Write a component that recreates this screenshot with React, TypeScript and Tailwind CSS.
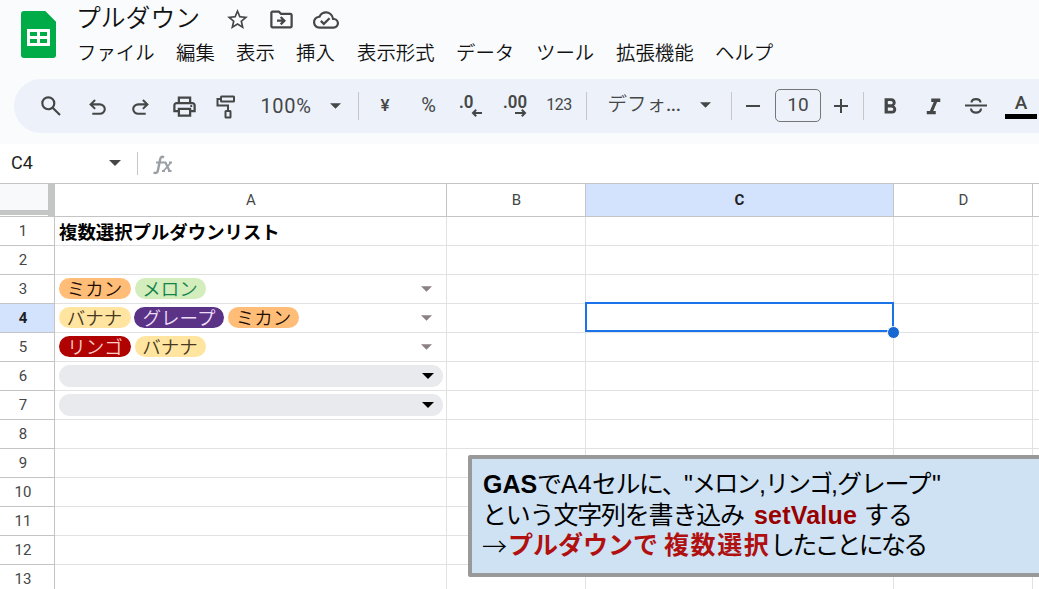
import type { ReactNode } from "react";
import {
  MdStarBorder,
  MdOutlineDriveFileMove,
  MdOutlineCloudDone,
  MdFormatBold,
  MdFormatItalic,
} from "react-icons/md";

const JP = "font-['Noto_Sans_CJK_JP',sans-serif]";

function Symbol({ d, className }: { d: string; className: string }) {
  return (
    <svg viewBox="0 -960 960 960" fill="currentColor" className={`shrink-0 ${className}`}>
      <path d={d} />
    </svg>
  );
}

function Item({ w, children }: { w: string; children: ReactNode }) {
  return <div className={`flex h-full shrink-0 items-center justify-center whitespace-nowrap ${w}`}>{children}</div>;
}

function Divider() {
  return <div className="h-7 w-px shrink-0 bg-[#c7c7c7]" />;
}

function Caret({ className }: { className: string }) {
  return (
    <svg viewBox="0 0 12 6" fill="currentColor" className={`shrink-0 ${className}`}>
      <path d="M0 0h12L6 6z" />
    </svg>
  );
}

function Chip({ w, color, children }: { w: string; color: string; children: ReactNode }) {
  return (
    <span
      className={`flex h-[21px] shrink-0 items-center justify-center rounded-full text-[18.5px] leading-[21px] font-[350] ${w} ${color}`}
    >
      {children}
    </span>
  );
}

function Seg({ w, children }: { w: string; children: ReactNode }) {
  return <span className={`shrink-0 whitespace-pre ${w}`}>{children}</span>;
}

const menus = [
  ["ファイル", "w-[99px]"],
  ["編集", "w-[60px]"],
  ["表示", "w-[60px]"],
  ["挿入", "w-[61px]"],
  ["表示形式", "w-[99px]"],
  ["データ", "w-[80px]"],
  ["ツール", "w-[80px]"],
  ["拡張機能", "w-[99px]"],
  ["ヘルプ", "w-[80px]"],
];

function Cells({ n }: { n: number }) {
  const line = "shrink-0 border-r border-b border-[#e1e1e1]";
  return (
    <>
      <div className={`flex w-[392px] items-center pl-1 ${line}`}>
        {n === 1 && <span className="text-[18.4px] leading-[26px] font-bold whitespace-nowrap text-black">複数選択プルダウンリスト</span>}
        {n >= 3 && n <= 5 && (
          <div className="flex w-full items-center gap-1 pr-[14px]">
            <div className="flex items-center gap-1 pb-[2px]">
              {n === 3 && (
                <>
                  <Chip w="w-[72px] pr-px" color="bg-[#ffbd78] text-[#1d0d04]">ミカン</Chip>
                  <Chip w="w-[71px] pr-px" color="bg-[#d4edbc] text-[#11834b]">メロン</Chip>
                </>
              )}
              {n === 4 && (
                <>
                  <Chip w="w-[72px] pr-px" color="bg-[#ffe5a0] text-[#473821]">バナナ</Chip>
                  <Chip w="w-[90px] -ml-px" color="bg-[#5a3286] text-[#eedcf6]">グレープ</Chip>
                  <Chip w="w-[71px]" color="bg-[#ffbd78] text-[#1d0d04]">ミカン</Chip>
                </>
              )}
              {n === 5 && (
                <>
                  <Chip w="w-[72px]" color="bg-[#b10202] text-[#ffcfc9]">リンゴ</Chip>
                  <Chip w="w-[71px] pr-px" color="bg-[#ffe5a0] text-[#473821]">バナナ</Chip>
                </>
              )}
            </div>
            <Caret className="ml-auto h-[6px] w-[11px] text-[#8c8084]" />
          </div>
        )}
        {(n === 6 || n === 7) && (
          <div className="flex h-[22px] w-[384px] shrink-0 items-center justify-end rounded-full bg-[#e8eaed] pr-[9px]">
            <Caret className="h-[6px] w-[12px] text-black" />
          </div>
        )}
      </div>
      <div className={`w-[139px] ${line}`} />
      <div className={`relative w-[308px] ${line}`}>
        {n === 4 && (
          <>
            <div className="absolute -top-[2px] -left-[1px] z-10 h-[30px] w-[309px] border-2 border-[#1a73e8]" />
            <div className="absolute top-[22px] left-[301px] z-20 size-[13px] rounded-full border border-white bg-[#1967d2]" />
          </>
        )}
      </div>
      <div className={`w-[139px] ${line}`} />
      <div className={`w-[20px] ${line}`} />
    </>
  );
}

export default function App() {
  const head = "flex shrink-0 items-center justify-center border-r border-b border-[#c4c4c4]";
  return (
    <div className={`relative h-[589px] w-[1039px] overflow-hidden bg-white ${JP}`}>
      <header className="flex h-[144px] flex-col bg-[#f9fbfd]">
        <div className="flex h-[79px] shrink-0">
          <div className="w-[77px] shrink-0 pt-[11px] pl-[21px]">
            <svg viewBox="0 0 35 47" className="h-[47px] w-[35px]">
              <path d="M3 0h21l11 11v33a3 3 0 0 1-3 3H3a3 3 0 0 1-3-3V3a3 3 0 0 1 3-3z" fill="#00ac47" />
              <path d="M24 0l11 11H24z" fill="#00a945" />
              <path d="M6 18h23v17H6zM9 21v4h7v-4zM19 21v4h7v-4zM9 28v4h7v-4zM19 28v4h7v-4z" fill="#fff" fillRule="evenodd" />
            </svg>
          </div>
          <div className="flex flex-col">
            <div className="flex h-9 items-center">
              <span className="-ml-px w-[149px] shrink-0 pb-[5px] text-[24.8px] leading-[30px] font-[350] text-[#111]">プルダウン</span>
              <div className="flex items-center gap-[18px] pt-[3px] text-[26px] text-[#444746]">
                <MdStarBorder className="size-[25px]" />
                <MdOutlineDriveFileMove className="size-[27px]" />
                <MdOutlineCloudDone className="size-[26px]" />
              </div>
            </div>
            <nav className="flex h-[32px] items-center text-[19.4px] font-[350] text-[#111]">
              {menus.map(([label, w]) => (
                <span key={label} className={`shrink-0 whitespace-nowrap ${w}`}>{label}</span>
              ))}
            </nav>
          </div>
        </div>
        <div className="ml-[14px] flex h-[54px] shrink-0 items-center overflow-hidden rounded-l-full bg-[#ecf1fa] pl-[14px] font-[Roboto,'Noto_Sans_CJK_JP',sans-serif] text-[#444746]">
          <Item w="w-[45px]">
            <Symbol className="size-[26px]" d="M784-120 532-372q-30 24-69 38t-83 14q-109 0-184.5-75.5T120-580q0-109 75.5-184.5T380-840q109 0 184.5 75.5T640-580q0 44-14 83t-38 69l252 252-56 56ZM380-400q75 0 127.5-52.5T560-580q0-75-52.5-127.5T380-760q-75 0-127.5 52.5T200-580q0 75 52.5 127.5T380-400Z" />
          </Item>
          <Item w="w-[49px]">
            <Symbol className="mt-[3px] size-[25px]" d="M280-200v-80h284q63 0 109.5-40T720-420q0-60-46.5-100T564-560H312l104 104-56 56-200-200 200-200 56 56-104 104h252q97 0 166.5 63T800-420q0 94-69.5 157T564-200H280Z" />
          </Item>
          <Item w="w-[37px]">
            <Symbol className="mt-[3px] size-[25px]" d="M396-200q-97 0-166.5-63T160-420q0-94 69.5-157T396-640h252L544-744l56-56 200 200-200 200-56-56 104-104H396q-63 0-109.5 40T240-420q0 60 46.5 100T396-280h284v80H396Z" />
          </Item>
          <Item w="w-[50px]">
            <Symbol className="size-[27px]" d="M640-640v-120H320v120h-80v-200h480v200h-80Zm80 180q17 0 28.5-11.5T760-500q0-17-11.5-28.5T720-540q-17 0-28.5 11.5T680-500q0 17 11.5 28.5T720-460Zm-80 260v-160H320v160h320Zm80 80H240v-160H80v-240q0-51 35-85.5t85-34.5h560q51 0 85.5 34.5T880-520v240H720v160Zm80-240v-160q0-17-11.5-28.5T760-560H200q-17 0-28.5 11.5T160-520v160h80v-80h480v80h80Z" />
          </Item>
          <Item w="w-[34px]">
            <svg viewBox="0 0 20 24" fill="none" stroke="currentColor" strokeWidth="2" className="mt-[2px] h-6 w-5 shrink-0">
              <rect x="5" y="1.5" width="13" height="5" rx="0.5" />
              <path d="M5 4H1.5v6.5H12V16" />
              <rect x="9.5" y="16" width="5" height="6.5" rx="0.5" />
            </svg>
          </Item>
          <Item w="w-[86px]"><span className="text-[20px] tracking-[0.7px]">100%</span></Item>
          <Item w="w-[13px]"><Caret className="h-[6px] w-[11px]" /></Item>
          <Item w="w-[33px]"><Divider /></Item>
          <Item w="w-[20px]"><span className="pb-[1px] text-[17px] font-medium">¥</span></Item>
          <Item w="w-[67px]"><span className="pb-[2px] text-[20px]">%</span></Item>
          <Item w="w-[17px]">
            <svg viewBox="0 0 24 24" className="size-6 shrink-0 overflow-visible">
              <text x="0" y="14" fill="currentColor" fontSize="17.5" fontWeight="600" textLength="14.5" lengthAdjust="spacingAndGlyphs">.0</text>
              <path d="M23 19H14M17.2 15.8L14 19l3.200 3.200" fill="none" stroke="currentColor" strokeWidth="2" />
            </svg>
          </Item>
          <Item w="w-[71px]">
            <svg viewBox="0 0 24 24" className="size-6 shrink-0 overflow-visible">
              <text x="0" y="14" fill="currentColor" fontSize="17.5" fontWeight="600" textLength="24" lengthAdjust="spacingAndGlyphs">.00</text>
              <path d="M12 19H21M18.800 15.8L22 19l-3.200 3.200" fill="none" stroke="currentColor" strokeWidth="2" />
            </svg>
          </Item>
          <Item w="w-[18px]"><span className="pb-[2px] text-[16px] tracking-[-0.5px]">123</span></Item>
          <Item w="w-[37px]"><Divider /></Item>
          <Item w="w-[77px]">
            <span className="pb-[2px] pl-px text-[19.5px] font-[350]">デフォ</span>
            <span className="pb-[2px] text-[19px] font-medium tracking-[-0.5px]">...</span>
          </Item>
          <Item w="w-[47px]"><Caret className="mb-[2px] h-[6px] w-[11px]" /></Item>
          <Item w="w-[5px]"><Divider /></Item>
          <Item w="w-[38px]"><span className="h-[2px] w-[14px] bg-[#444746]" /></Item>
          <Item w="w-[52px]">
            <span className="mb-[1px] flex h-[33px] w-[46px] items-center justify-center rounded-[5px] border border-[#747775] text-[19px]">10</span>
          </Item>
          <Item w="w-[34px]">
            <svg viewBox="0 0 14 14" className="size-[14px] shrink-0"><path d="M7 0v14M0 7h14" stroke="currentColor" strokeWidth="2" /></svg>
          </Item>
          <Item w="w-[11px]"><Divider /></Item>
          <Item w="w-[40px]"><MdFormatBold className="mt-[2px] ml-px size-[26px] shrink-0" /></Item>
          <Item w="w-[48px]"><MdFormatItalic className="mt-[2px] size-[27px] shrink-0" /></Item>
          <Item w="w-[38px]">
            <svg viewBox="0 0 22 18" fill="none" stroke="currentColor" strokeWidth="2.2" className="h-[18px] w-[22px] shrink-0">
              <path d="M0 8.5h22M6.5 5.5C7 1 15 1 15.5 5.5M6 11.5c0 5.500 10 5.500 10 0" />
            </svg>
          </Item>
          <Item w="w-[52px]">
            <div className="flex w-8 flex-col items-center">
              <span className="h-5 text-[19px] leading-5 font-medium">A</span>
              <span className="mt-[1px] h-[5px] w-8 bg-black" />
            </div>
          </Item>
        </div>
      </header>

      <div className="flex h-10 items-center border-b border-[#c4c4c4] pb-[1px] font-[Roboto,sans-serif]">
        <span className="w-[109px] pb-[1px] pl-[11px] text-[18px] text-[#1f1f1f]">C4</span>
        <Caret className="h-[6px] w-[12px] text-[#444746]" />
        <div className="ml-4 h-[23px] w-px bg-[#c7c7c7]" />
        <svg viewBox="0 0 20 20" fill="none" stroke="#9aa0a6" className="mt-[3px] ml-[15px] size-5">
          <path d="M11 2.5C8.500 0.800 7.500 2.500 7 5L5 15C4.500 18 3 18.500 0.500 17.500" strokeWidth="2.4" />
          <path d="M3 7.500H12.500L16.500 16" strokeWidth="2.2" />
          <path d="M16 7.500H19M9 16H12M15 16H18.500M18 7.500L10.500 16" strokeWidth="1.8" />
        </svg>
      </div>

      <div className="flex h-[33px] font-[Roboto,sans-serif] text-[15px] text-[#444746]">
        <div className="flex w-[55px] shrink-0 flex-col border-r border-b border-[#c4c4c4] bg-white">
          <div className="h-[31px] border-r-[6px] border-b-[5px] border-[#c3c6c4] bg-[#f8f9fa]" />
          <div className="ml-auto h-[1px] w-[6px] bg-[#c3c6c4]" />
        </div>
        <div className={`w-[392px] pl-px ${head}`}>A</div>
        <div className={`w-[139px] pl-px ${head}`}>B</div>
        <div className={`w-[308px] bg-[#d3e3fd] font-bold text-[#1f1f1f] ${head}`}>C</div>
        <div className={`w-[139px] pl-px ${head}`}>D</div>
        <div className={`w-[20px] ${head}`} />
      </div>

      {Array.from({ length: 13 }, (_, i) => i + 1).map((n) => (
        <div key={n} className="flex h-[29px]">
          <div
            className={`flex w-[55px] shrink-0 items-center justify-center border-r border-b border-[#c4c4c4] pr-2 font-[Roboto,sans-serif] text-[15px] ${
              n === 4 ? "bg-[#d3e3fd] font-bold text-[#1f1f1f]" : "text-[#444746]"
            }`}
          >
            {n}
          </div>
          <Cells n={n} />
        </div>
      ))}

      <div className="absolute top-[455px] left-[468px] z-30 flex h-[122px] w-[580px] flex-col rounded-[2px] border-4 border-[#999999] bg-[#cfe2f3] pt-[10px] pl-[11px] font-['Liberation_Sans','Noto_Sans_CJK_JP',sans-serif] text-[25px] leading-[30px] text-black">
        <p className="flex h-[30px]">
          <Seg w="w-[54px] font-bold">GAS</Seg>
          <Seg w="w-[24px]">で</Seg>
          <Seg w="w-[31px]">A4</Seg>
          <Seg w="w-[92px] tracking-[-1.5px]">セルに、</Seg>
          <Seg w="w-[8px]">"</Seg>
          <Seg w="w-[67px] text-[24px] tracking-[-1.8px]">メロン</Seg>
          <Seg w="w-[6px]">,</Seg>
          <Seg w="w-[66px] text-[24px] tracking-[-2px]">リンゴ</Seg>
          <Seg w="w-[6px]">,</Seg>
          <Seg w="w-[95px] tracking-[-1.3px]">グレープ</Seg>
          <Seg w="w-[10px]">"</Seg>
        </p>
        <p className="flex h-[30px] pt-px">
          <Seg w="w-[270px] -ml-px tracking-[-1.2px]">という文字列を書き込み</Seg>
          <Seg w="w-[110px] ml-[2px] font-bold text-[#990000] tracking-[0.2px]">setValue</Seg>
          <Seg w="w-[50px] tracking-[-1px]">する</Seg>
        </p>
        <p className="flex h-[30px] pt-px">
          <Seg w="w-[25px] -ml-px font-['Noto_Sans_CJK_JP',sans-serif] font-light leading-[30px]">→</Seg>
          <Seg w="w-[156px] ml-px font-bold text-[#b01010]">プルダウンで</Seg>
          <Seg w="w-[106px] font-bold text-[#b01010] tracking-[1.6px]">複数選択</Seg>
          <Seg w="w-[160px] tracking-[-2.8px]">したことになる</Seg>
        </p>
      </div>
    </div>
  );
}
